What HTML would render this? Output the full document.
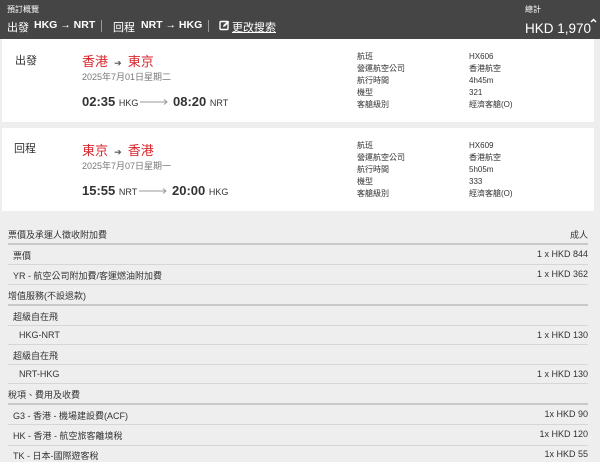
<!DOCTYPE html>
<html><head><meta charset="utf-8"><style>
*{margin:0;padding:0;box-sizing:border-box}
body{width:600px;height:458px;overflow:hidden;background:#eeeeee;font-family:"Liberation Sans","Noto Sans CJK TC",sans-serif;color:#333;position:relative}
.abs{position:absolute;white-space:nowrap}
.hdr{position:absolute;left:0;top:0;width:600px;height:39px;background:#454545;color:#fff}
.hdr .t{position:absolute;top:19px;font-size:11px;white-space:nowrap}
.card{position:absolute;left:2px;width:592px;background:#fff}
.red{color:#d9262d;font-size:13px}
.lbl{font-size:8px;color:#333;line-height:12px}
.row{position:absolute;left:8px;width:580px;font-size:9px;color:#333}
.line{position:absolute;left:8px;width:580px;height:1px;background:#d6d6d6}
.thick{height:2px;background:#c8c8c8}
.r{position:absolute;right:0;top:0}
</style></head><body>
<div class="hdr">
 <div class="abs" style="left:7px;top:4px;font-size:8px">預訂概覽</div>
 <div class="t" style="left:7px">出發</div>
 <div class="t" style="left:34px;font-weight:bold;font-size:10.5px">HKG → NRT</div>
 <div class="abs" style="left:101px;top:20px;width:1px;height:12px;background:#999"></div>
 <div class="t" style="left:113px">回程</div>
 <div class="t" style="left:141px;font-weight:bold;font-size:10.5px">NRT → HKG</div>
 <div class="abs" style="left:208px;top:20px;width:1px;height:12px;background:#999"></div>
 <svg class="abs" style="left:219px;top:20px" width="11" height="11" viewBox="0 0 11 11"><rect x="1" y="1.5" width="8" height="8" rx="1" fill="none" stroke="#fff" stroke-width="1.4"/><path d="M4 7 L4.5 5 L9 0.8 L10.3 2 L6 6.4 Z" fill="#fff"/></svg>
 <div class="t" style="left:232px;text-decoration:underline">更改搜索</div>
 <div class="abs" style="left:525px;top:4px;font-size:8px">總計</div>
 <div class="abs" style="left:525px;top:21px;font-size:13.5px">HKD 1,970</div>
 <svg class="abs" style="left:590px;top:18px" width="7" height="5" viewBox="0 0 7 5"><path d="M1 4 L3.5 1.5 L6 4" fill="none" stroke="#fff" stroke-width="1.5"/></svg>
</div>

<div class="card" style="top:39px;height:83px">
 <div class="abs" style="left:13px;top:13px;font-size:11px">出發</div>
 <div class="abs red" style="left:80px;top:12px">香港 <span style="color:#555;font-size:9px">&nbsp;➔&nbsp;</span> 東京</div>
 <div class="abs" style="left:80px;top:31px;font-size:9px;color:#777">2025年7月01日星期二</div>
 <div class="abs" style="left:80px;top:55px;font-size:13px"><b>02:35</b> <span style="font-size:9px">HKG</span></div>
 <svg class="abs" style="left:138px;top:59px" width="29" height="8" viewBox="0 0 29 8"><path d="M0 4 H27 M24 1.5 L27 4 L24 6.5" fill="none" stroke="#999" stroke-width="1"/></svg>
 <div class="abs" style="left:171px;top:55px;font-size:13px"><b>08:20</b> <span style="font-size:9px">NRT</span></div>
 <div class="abs lbl" style="left:355px;top:12px">航班<br>營運航空公司<br>航行時間<br>機型<br>客艙級別</div>
 <div class="abs lbl" style="left:467px;top:12px">HX606<br>香港航空<br>4h45m<br>321<br>經濟客艙(O)</div>
</div>

<div class="card" style="top:128px;height:83px">
 <div class="abs" style="left:12px;top:12px;font-size:11px">回程</div>
 <div class="abs red" style="left:80px;top:12px">東京 <span style="color:#555;font-size:9px">&nbsp;➔&nbsp;</span> 香港</div>
 <div class="abs" style="left:80px;top:31px;font-size:9px;color:#777">2025年7月07日星期一</div>
 <div class="abs" style="left:80px;top:55px;font-size:13px"><b>15:55</b> <span style="font-size:9px">NRT</span></div>
 <svg class="abs" style="left:137px;top:59px" width="29" height="8" viewBox="0 0 29 8"><path d="M0 4 H27 M24 1.5 L27 4 L24 6.5" fill="none" stroke="#999" stroke-width="1"/></svg>
 <div class="abs" style="left:170px;top:55px;font-size:13px"><b>20:00</b> <span style="font-size:9px">HKG</span></div>
 <div class="abs lbl" style="left:355px;top:12px">航班<br>營運航空公司<br>航行時間<br>機型<br>客艙級別</div>
 <div class="abs lbl" style="left:467px;top:12px">HX609<br>香港航空<br>5h05m<br>333<br>經濟客艙(O)</div>
</div>

<div class="row" style="top:228px">票價及承運人徵收附加費<span class="r">成人</span></div>
<div class="line thick" style="top:243px"></div>
<div class="row" style="top:249px;padding-left:5px">票價<span class="r">1 x HKD 844</span></div>
<div class="line" style="top:264px"></div>
<div class="row" style="top:269px;padding-left:5px">YR - 航空公司附加費/客運燃油附加費<span class="r">1 x HKD 362</span></div>
<div class="line" style="top:284px"></div>
<div class="row" style="top:289px">增值服務(不設退款)</div>
<div class="line thick" style="top:304px"></div>
<div class="row" style="top:310px;padding-left:5px">超級自在飛</div>
<div class="line" style="top:325px"></div>
<div class="row" style="top:330px;padding-left:11px">HKG-NRT<span class="r">1 x HKD 130</span></div>
<div class="line" style="top:344px"></div>
<div class="row" style="top:349px;padding-left:5px">超級自在飛</div>
<div class="line" style="top:364px"></div>
<div class="row" style="top:369px;padding-left:11px">NRT-HKG<span class="r">1 x HKD 130</span></div>
<div class="line" style="top:383px"></div>
<div class="row" style="top:388px">稅項、費用及收費</div>
<div class="line thick" style="top:403px"></div>
<div class="row" style="top:409px;padding-left:5px">G3 - 香港 - 機場建設費(ACF)<span class="r">1x HKD 90</span></div>
<div class="line" style="top:424px"></div>
<div class="row" style="top:429px;padding-left:5px">HK - 香港 - 航空旅客離境稅<span class="r">1x HKD 120</span></div>
<div class="line" style="top:445px"></div>
<div class="row" style="top:449px;padding-left:5px">TK - 日本-國際遊客稅<span class="r">1x HKD 55</span></div>
</body></html>
